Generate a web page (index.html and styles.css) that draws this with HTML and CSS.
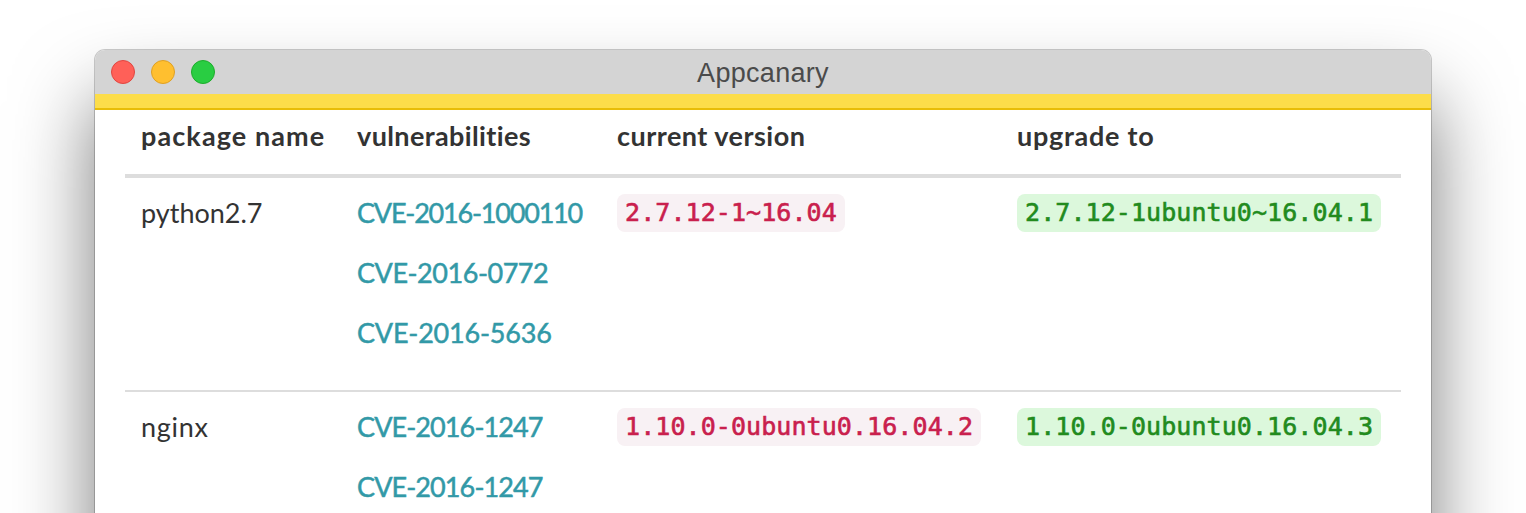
FILE: index.html
```
<!DOCTYPE html>
<html lang="en">
<head>
<meta charset="utf-8">
<title>Appcanary</title>
<link rel="stylesheet" href="styles.css">
</head>
<body>
<main class="window">
  <header class="titlebar">
    <div class="controls"><span class="dot close"></span><span class="dot minimize"></span><span class="dot expand"></span></div>
    <h1 class="title">Appcanary</h1>
  </header>
  <div class="accent"></div>
  <section class="table">
    <div class="row head">
      <div class="cell h-package">package name</div>
      <div class="cell h-vuln">vulnerabilities</div>
      <div class="cell h-current">current version</div>
      <div class="cell h-upgrade">upgrade to</div>
    </div>
    <div class="row">
      <div class="cell name">python2.7</div>
      <div class="cell links"><a class="cve-long">CVE-2016-1000110</a><a class="cve-mid">CVE-2016-0772</a><a class="cve-wide">CVE-2016-5636</a></div>
      <div class="cell"><code class="version old">2.7.12-1~16.04</code></div>
      <div class="cell"><code class="version new">2.7.12-1ubuntu0~16.04.1</code></div>
    </div>
    <div class="row last">
      <div class="cell name nginx">nginx</div>
      <div class="cell links"><a class="cve-tight">CVE-2016-1247</a><a class="cve-tight">CVE-2016-1247</a></div>
      <div class="cell"><code class="version old">1.10.0-0ubuntu0.16.04.2</code></div>
      <div class="cell"><code class="version new">1.10.0-0ubuntu0.16.04.3</code></div>
    </div>
  </section>
</main>
</body>
</html>
```
FILE: styles.css
```
* { box-sizing: border-box; }
html { overflow: hidden; }
body { margin: 0; height: 513px; overflow: hidden; padding: 50px 95px 0; background: #fff; font-family: Lato, "Open Sans", sans-serif; color: #333; }
.window { height: 560px; border-radius: 10px 10px 0 0; background: #fff; box-shadow: 0 0 0 1px rgba(0,0,0,.2), 0 50px 80px rgba(0,0,0,.53); }
.titlebar { height: 44px; display: grid; grid-template-columns: 1fr auto 1fr; align-items: center; padding: 0 16px; background: #d4d4d4; border-radius: 10px 10px 0 0; }
.controls { display: flex; gap: 16px; }
.dot { width: 24px; height: 24px; border-radius: 50%; border: 1px solid; }
.close { background: #ff6058; border-color: #e14640; }
.minimize { background: #ffbf2f; border-color: #dfa023; }
.expand { background: #29cd42; border-color: #1dad2b; }
.title { margin: 0; padding-top: 2px; font: 400 27px/42px "Liberation Sans", sans-serif; letter-spacing: .3px; color: #4b4b4b; }
.accent { height: 16px; background: #fcdd4a; border-bottom: 2px solid #e8bd07; }
.table { padding: 0 30px; }
.row { display: grid; grid-template-columns: 216px 260px 400px 1fr; height: 214px; padding: 16px 16px 0; border-bottom: 2px solid #ddd; font-size: 27px; line-height: 36px; font-variant-ligatures: none; }
.head { height: 68px; padding-top: 8px; border-bottom-width: 4px; font-weight: 700; }
.last { height: 121px; border-bottom: 0; }
.cell { white-space: nowrap; }
.h-package { letter-spacing: 1.1px; }
.h-vuln { letter-spacing: .37px; }
.h-current { letter-spacing: .48px; }
.h-upgrade { letter-spacing: .72px; }
.name { padding-top: 1px; }
.nginx { letter-spacing: .7px; }
.links { display: flex; flex-direction: column; align-items: flex-start; gap: 24px; padding-top: 1px; color: #3299a7; -webkit-text-stroke: .5px #3299a7; }
.cve-long { letter-spacing: -1.2px; }
.cve-mid { letter-spacing: -.46px; }
.cve-wide { letter-spacing: -.2px; }
.cve-tight { letter-spacing: -.9px; }
.version { display: block; width: fit-content; height: 38px; padding: 0 8px; border-radius: 8px; font: 25px/38px "DejaVu Sans Mono", monospace; letter-spacing: .08px; -webkit-text-stroke: .6px currentColor; }
.old { color: #c9204d; background: #f8f1f4; }
.new { color: #228b1e; background: #dcf8dc; }
```
